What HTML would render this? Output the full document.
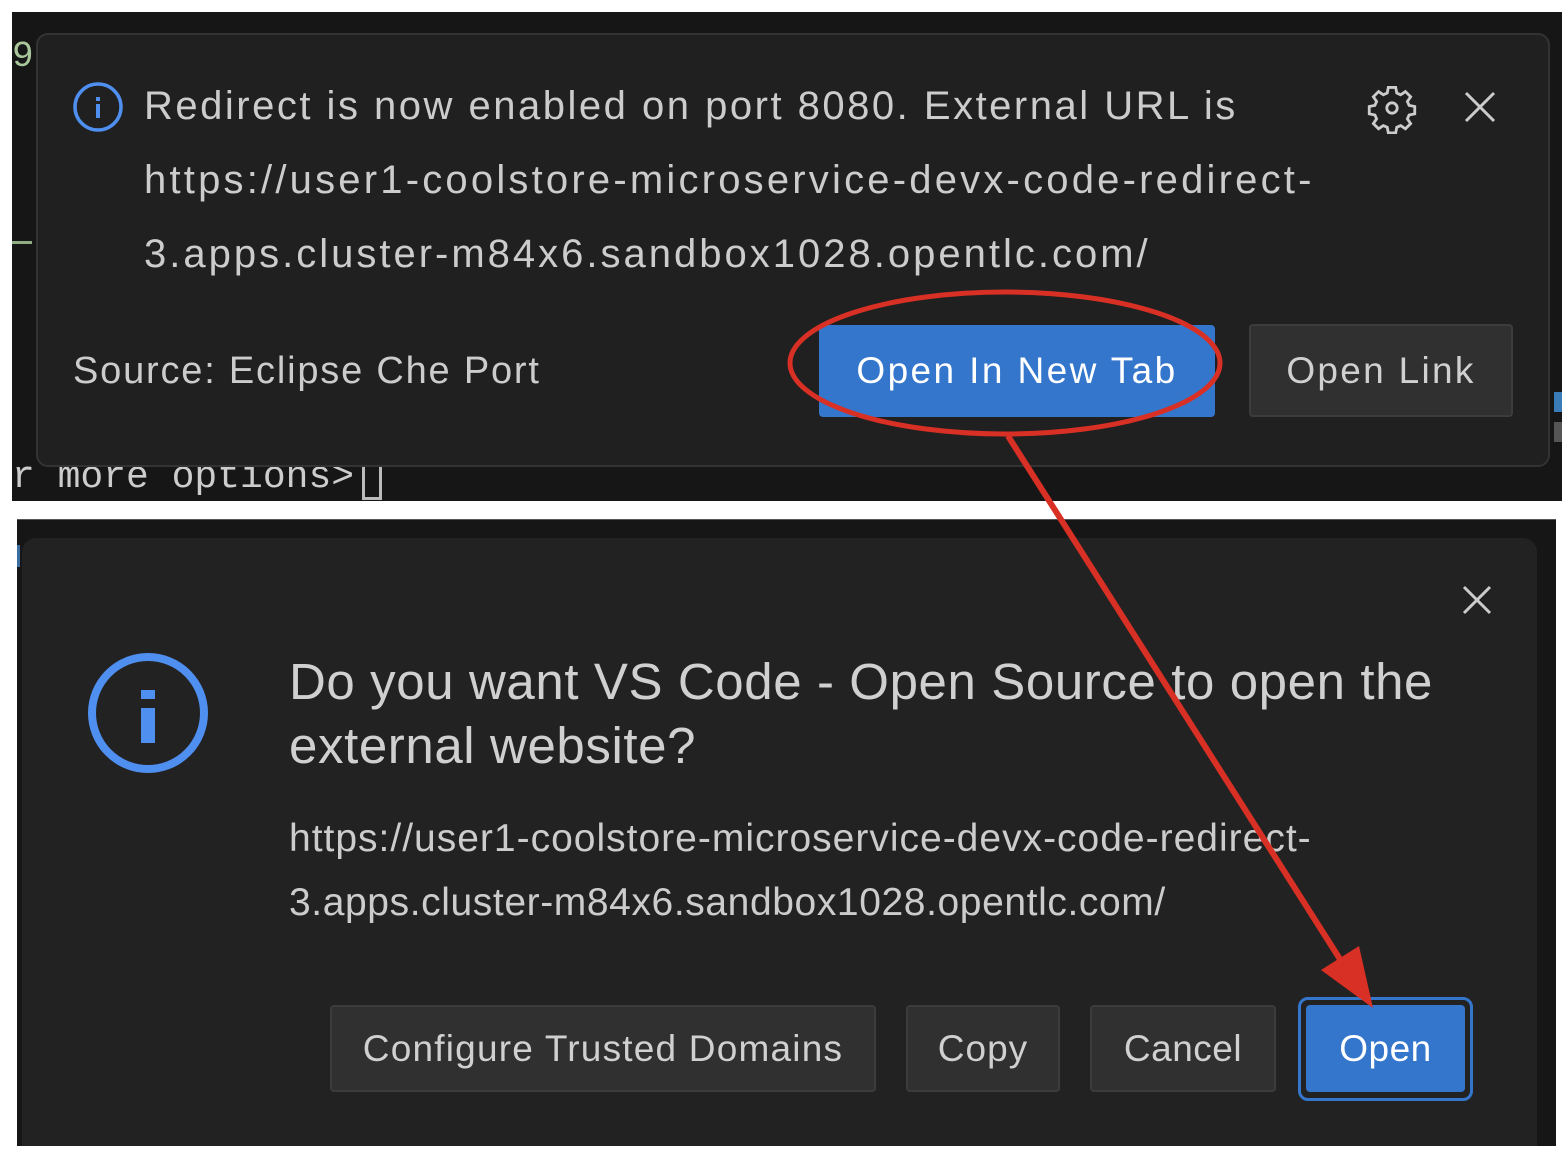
<!DOCTYPE html>
<html><head><meta charset="utf-8"><style>
*{margin:0;padding:0;box-sizing:border-box}
body{width:1562px;height:1156px;background:#fff;position:relative;overflow:hidden;font-family:"Liberation Sans",sans-serif;color:#cccccc}
.a{position:absolute;white-space:nowrap}
.btn{position:absolute;border-radius:4px;display:flex;align-items:center;justify-content:center;font-size:37px}
.sec{background:#303030;border:2px solid #3c3c3c;color:#d0d0d0}
.pri{background:#3476cc;color:#fff}
</style></head><body>
<div class="a" style="left:12px;top:12px;width:1550px;height:489px;background:#161616"></div>
<div class="a" style="left:12px;top:36px;font-family:'Liberation Mono',monospace;font-size:36px;color:#a9c79a">9</div>
<div class="a" style="left:12px;top:241px;width:20px;height:3px;background:#8fae84"></div>
<div class="a" style="left:12px;top:456px;font-family:'Liberation Mono',monospace;font-size:38px;color:#ccc">r more options&gt;</div>
<div class="a" style="left:362px;top:466px;width:20px;height:34px;border:3px solid #bbb;border-top:none"></div>
<div class="a" style="left:1554px;top:392px;width:8px;height:20px;background:#3a7cb8"></div>
<div class="a" style="left:1554px;top:422px;width:8px;height:20px;background:#555"></div>
<div class="a" style="left:36px;top:33px;width:1514px;height:434px;background:#202020;border:2px solid #333;border-radius:12px"></div>
<svg class="a" style="left:72px;top:81px" width="54" height="54" viewBox="0 0 54 54"><circle cx="26" cy="26" r="23" fill="none" stroke="#4f8ff0" stroke-width="3.5"/><rect x="24" y="16" width="4" height="4" fill="#4f8ff0"/><rect x="24" y="23" width="4" height="14" fill="#4f8ff0"/></svg>
<div class="a" style="left:144px;top:84px;font-size:40px;letter-spacing:2.5px">Redirect is now enabled on port 8080. External URL is</div>
<div class="a" style="left:144px;top:158px;font-size:40px;letter-spacing:3.2px">https://user1-coolstore-microservice-devx-code-redirect-</div>
<div class="a" style="left:144px;top:232px;font-size:40px;letter-spacing:3px">3.apps.cluster-m84x6.sandbox1028.opentlc.com/</div>
<svg class="a" style="left:1366px;top:82px" width="52" height="52" viewBox="0 0 24 24"><path fill="none" stroke="#ccc" stroke-width="1.3" d="M10.3 2.5h3.4l.5 2.6 1.8.8 2.2-1.5 2.4 2.4-1.5 2.2.8 1.8 2.6.5v3.4l-2.6.5-.8 1.8 1.5 2.2-2.4 2.4-2.2-1.5-1.8.8-.5 2.6h-3.4l-.5-2.6-1.8-.8-2.2 1.5-2.4-2.4 1.5-2.2-.8-1.8-2.6-.5v-3.4l2.6-.5.8-1.8-1.5-2.2 2.4-2.4 2.2 1.5 1.8-.8z"/><circle cx="12" cy="12" r="2.4" fill="none" stroke="#ccc" stroke-width="1.3"/></svg>
<svg class="a" style="left:1464px;top:91px" width="32" height="32"><path d="M2 2L30 30M30 2L2 30" stroke="#ccc" stroke-width="3"/></svg>
<div class="a" style="left:73px;top:350px;font-size:38px;letter-spacing:1.8px">Source: Eclipse Che Port</div>
<div class="btn pri" style="left:819px;top:325px;width:396px;height:92px;letter-spacing:2.4px">Open In New Tab</div>
<div class="btn sec" style="left:1249px;top:324px;width:264px;height:93px;letter-spacing:2.3px">Open Link</div>

<div class="a" style="left:17px;top:519px;width:1539px;height:627px;background:#161616;border-top:1px solid #555"></div>
<div class="a" style="left:17px;top:545px;width:3px;height:22px;background:#3a6ea0"></div>
<div class="a" style="left:22px;top:538px;width:1515px;height:608px;background:#222;border-radius:14px 14px 0 0"></div>
<svg class="a" style="left:1462px;top:585px" width="30" height="30"><path d="M2 2L28 28M28 2L2 28" stroke="#ccc" stroke-width="3"/></svg>
<svg class="a" style="left:86px;top:651px" width="124" height="124" viewBox="0 0 124 124"><circle cx="62" cy="62" r="56" fill="none" stroke="#4f8ff0" stroke-width="8"/><rect x="55" y="39" width="14" height="9" fill="#4f8ff0"/><rect x="55" y="57" width="14" height="35" fill="#4f8ff0"/></svg>
<div class="a" style="left:289px;top:652px;font-size:51px;color:#d0d0d0;letter-spacing:0.6px">Do you want VS Code - Open Source to open the</div>
<div class="a" style="left:289px;top:716px;font-size:51px;color:#d0d0d0;letter-spacing:0.6px">external website?</div>
<div class="a" style="left:289px;top:817px;font-size:39px;letter-spacing:1px">https://user1-coolstore-microservice-devx-code-redirect-</div>
<div class="a" style="left:289px;top:881px;font-size:39px;letter-spacing:0.6px">3.apps.cluster-m84x6.sandbox1028.opentlc.com/</div>
<div class="btn sec" style="left:330px;top:1005px;width:546px;height:87px;letter-spacing:1.2px">Configure Trusted Domains</div>
<div class="btn sec" style="left:906px;top:1005px;width:154px;height:87px;letter-spacing:1px">Copy</div>
<div class="btn sec" style="left:1090px;top:1005px;width:186px;height:87px;letter-spacing:0.5px">Cancel</div>
<div class="a" style="left:1298px;top:997px;width:175px;height:104px;border:3px solid #3476cc;border-radius:10px"></div>
<div class="btn pri" style="left:1306px;top:1005px;width:159px;height:87px;letter-spacing:0.5px">Open</div>

<svg class="a" style="left:0;top:0" width="1562" height="1156">
<ellipse cx="1005" cy="363" rx="215" ry="71" fill="none" stroke="#d93025" stroke-width="5"/>
<line x1="1008" y1="436" x2="1350" y2="975" stroke="#d93025" stroke-width="6"/>
<polygon points="1373,1008 1321,970 1359,946" fill="#d93025"/>
</svg>
</body></html>
